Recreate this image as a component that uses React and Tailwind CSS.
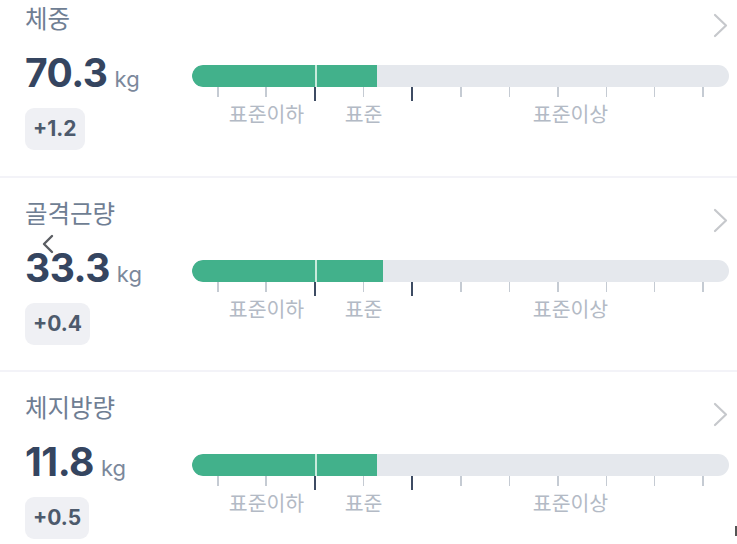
import React from "react";

const KR = { fontFamily: '"Noto Sans CJK KR", "Noto Sans", sans-serif' };
const NUM = { fontFamily: 'Inter, "Noto Sans", sans-serif' };

function Chevron() {
  return (
    <svg width="15" height="25" viewBox="0 0 15 25" className="mt-[11px] mr-[1px]">
      <polyline points="2,2 13,12.5 2,23" fill="none" stroke="#c6c8cc" strokeWidth="2.2" strokeLinecap="round" strokeLinejoin="round" />
    </svg>
  );
}

function Chart({ fill }) {
  const ticks = Array.from({ length: 11 }, (_, i) => i);
  return (
    <div className="flex-1 pt-[14px]">
      <div className="relative h-[22px] rounded-full bg-[#e5e8ed] overflow-hidden">
        <div className="absolute left-0 top-0 h-full rounded-l-full bg-[#42b18b]" style={{ width: fill }} />
        <div className="absolute top-0 h-full left-[123px] w-[1.5px] bg-[#c9eadc]" />
      </div>
      <div className="flex justify-between items-start px-[25px] h-[14px]">
        {ticks.map((i) =>
          i === 2 || i === 4 ? (
            <div key={i} className="w-[2px] h-[14px] bg-[#3d4b63]" />
          ) : (
            <div key={i} className="w-[1.5px] h-[10px] bg-[#c5cbd3]" />
          )
        )}
      </div>
      <div className="flex text-[20.5px] leading-[24px] text-[#b3bac5]" style={KR}>
        <div className="w-[26px]" />
        <div className="w-[97px] text-center">표준이하</div>
        <div className="w-[97px] text-center">표준</div>
        <div className="flex-1 text-center">표준이상</div>
      </div>
    </div>
  );
}

function Section({ title, value, delta, fill, first }) {
  return (
    <div className={`pl-[25px] pr-[8px] border-b-2 border-[#f3f3f8] ${first ? "pt-[2px] pb-[26px]" : "pt-[19px] pb-[25px]"}`}>
      <div className="flex justify-between items-start h-[32px]">
        <div className="text-[24.5px] leading-[32px] text-[#6f7e93]" style={KR}>{title}</div>
        <Chevron />
      </div>
      <div className="flex mt-[17px]">
        <div className="w-[167px]">
          <div className="flex items-baseline h-[44px]" style={NUM}>
            <span className="text-[39px] leading-[44px] font-bold tracking-[-0.5px] text-[#354560]">{value}</span>
            <span className="text-[22px] ml-[7px] text-[#7b889b]">kg</span>
          </div>
          <div className="mt-[13px] inline-flex items-center h-[42px] px-[8px] rounded-[9px] bg-[#eff0f4] text-[21px] font-bold text-[#4d5a6c]" style={NUM}>
            {delta}
          </div>
        </div>
        <Chart fill={fill} />
      </div>
    </div>
  );
}

export default function App() {
  return (
    <div className="relative w-[737px] h-[544px] overflow-hidden bg-white">
      <Section first title="체중" value="70.3" delta="+1.2" fill={185} />
      <Section title="골격근량" value="33.3" delta="+0.4" fill={191} />
      <Section title="체지방량" value="11.8" delta="+0.5" fill={185} />
      <svg width="14" height="20" viewBox="0 0 14 20" className="absolute left-[41px] top-[234px]">
        <polyline points="11,2 3,10 11,18" fill="none" stroke="#5a5d62" strokeWidth="2.4" strokeLinecap="round" strokeLinejoin="round" />
      </svg>
      <div className="absolute left-[735px] top-[526px] w-[2px] h-[10px] bg-[#555]" />
    </div>
  );
}
